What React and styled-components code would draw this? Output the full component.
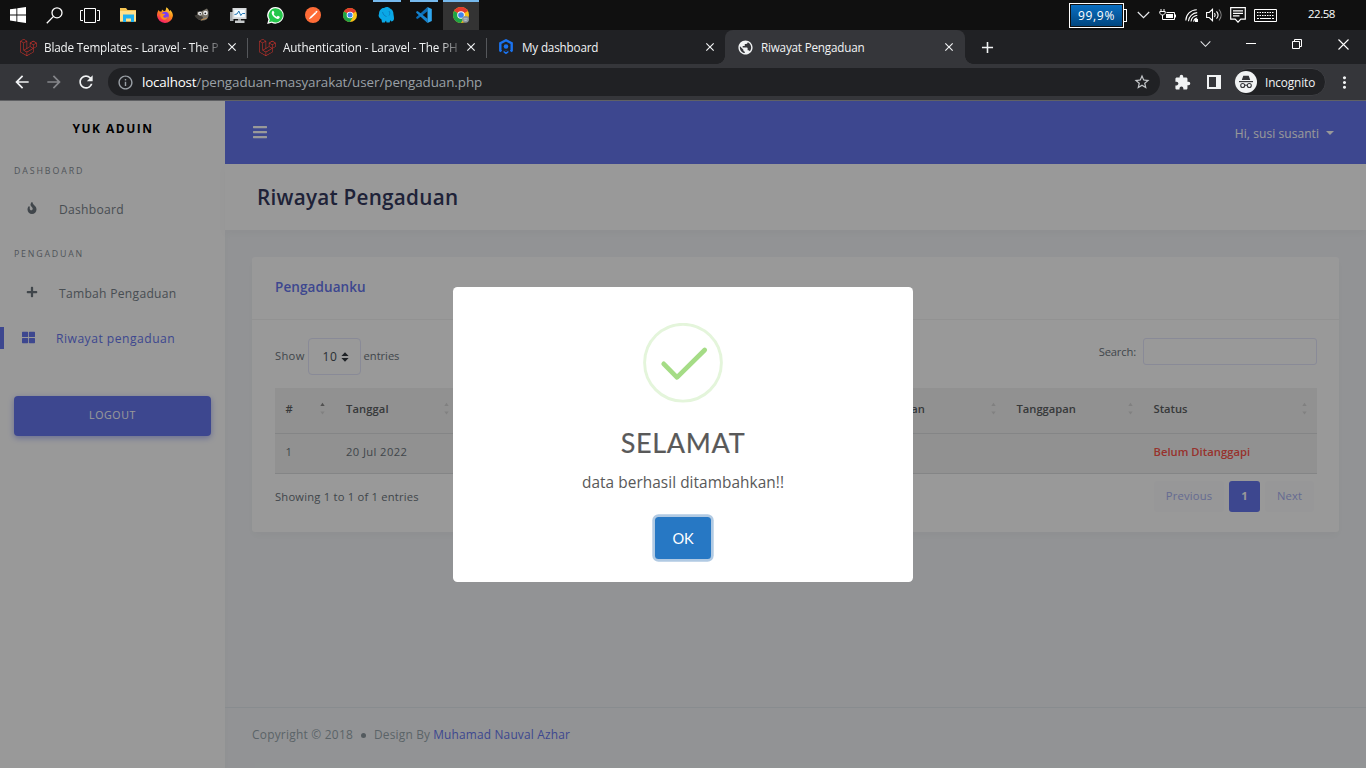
import React from 'react';
import styled, { createGlobalStyle, css } from 'styled-components';
import { FaFire, FaPlus, FaThLarge, FaBars, FaLaravel } from 'react-icons/fa';
import {
  MdArrowBack, MdArrowForward, MdRefresh, MdInfoOutline, MdStarBorder,
  MdExtension, MdMoreVert, MdPublic, MdClose, MdAdd,
} from 'react-icons/md';

const GlobalStyle = createGlobalStyle`
  *, *::before, *::after { box-sizing: border-box; }
  html, body { margin: 0; padding: 0; }
  body { width: 1366px; height: 768px; overflow: hidden; font-family: "Open Sans", "Noto Sans", sans-serif; }
  svg { display: block; flex: none; }
`;

const Screen = styled.div`
  display: flex;
  flex-direction: column;
  width: 1366px;
  height: 768px;
  overflow: hidden;
`;

const Text = styled.span`
  white-space: pre;
  letter-spacing: ${(p) => p.$ls || 0}px;
`;

/* ---------- Taskbar ---------- */

const Taskbar = styled.div`
  display: flex;
  align-items: stretch;
  height: 30px;
  background: #101010;
  color: #fff;
`;

const TaskItem = styled.div`
  width: ${(p) => p.$w || 37}px;
  display: flex;
  align-items: center;
  justify-content: center;
  background: ${(p) => (p.$active ? '#333' : 'transparent')};
  box-shadow: ${(p) => (p.$active ? 'inset 0 2px #76b9ed' : 'none')};
  ${(p) => p.$running && css`
    background: linear-gradient(#76b9ed, #76b9ed) center top / 28px 2px no-repeat;
  `}
`;

const Tray = styled.div`
  margin-left: auto;
  display: flex;
  align-items: center;
`;

const Battery = styled.div`
  display: flex;
  align-items: center;
  margin-right: 10px;
`;

const BatteryBody = styled.div`
  width: 55px;
  height: 25px;
  margin-top: 1px;
  border: 1px solid #fff;
  padding: 1px;
  display: flex;
`;

const BatteryFill = styled.div`
  flex: 1;
  display: flex;
  align-items: center;
  justify-content: center;
  background: linear-gradient(#0a6fc2, #01467f);
  font-size: 12px;
`;

const BatteryTip = styled.div`
  width: 3px;
  height: 13px;
  border: 1px solid #fff;
  border-left: 0;
`;

const TrayIcon = styled.div`
  width: ${(p) => p.$w}px;
  display: flex;
  justify-content: center;
`;

const Clock = styled.div`
  width: 58px;
  margin-left: 23px;
  margin-bottom: 3px;
  font-size: 11.5px;
  line-height: 14px;
`;

/* ---------- Browser ---------- */

const TabStrip = styled.div`
  display: flex;
  height: 34px;
  padding-left: 9px;
  background: #202124;
  color: #f1f3f4;
`;

const Tab = styled.div`
  position: relative;
  width: 239px;
  display: flex;
  align-items: center;
  padding: 0 10px 0 11px;
  font-size: 11.7px;
  border-radius: 8px 8px 0 0;
  ${(p) => p.$divider && css`
    background: linear-gradient(#55575b, #55575b) right 8px / 1px 20px no-repeat;
  `}
  ${(p) => p.$active && css`
    width: 240px;
    margin-left: -1px;
    padding-left: 12px;
    background: #35363a;
    &::before, &::after {
      content: '';
      position: absolute;
      bottom: 0;
      width: 8px;
      height: 8px;
    }
    &::before { left: -8px; background: radial-gradient(circle at 0 0, transparent 7.5px, #35363a 8px); }
    &::after { right: -8px; background: radial-gradient(circle at 100% 0, transparent 7.5px, #35363a 8px); }
  `}
`;

const TabIcon = styled.div`
  width: 16px;
  margin-right: 8px;
  display: flex;
  justify-content: center;
`;

const TabTitle = styled.div`
  white-space: nowrap;
  letter-spacing: ${(p) => p.$ls}px;
  ${(p) => p.$fade && css`mask-image: linear-gradient(90deg, #000 155px, rgba(0, 0, 0, 0.25) 176px);`}
`;

const TabClose = styled.div`
  margin-left: auto;
  margin-right: -1px;
`;

const NewTab = styled.div`
  width: 44px;
  display: flex;
  align-items: center;
  justify-content: center;
`;

const WindowControls = styled.div`
  margin-left: auto;
  display: flex;
  align-items: center;
  padding-bottom: 6px;
`;

const WindowButton = styled.div`
  width: 46px;
  display: flex;
  justify-content: center;
`;

const Toolbar = styled.div`
  display: flex;
  align-items: center;
  height: 37px;
  padding: 0 6px;
  background: #35363a;
  border-bottom: 1px solid #606164;
  color: #f1f3f4;
`;

const ToolButton = styled.div`
  width: 32px;
  display: flex;
  justify-content: center;
  color: ${(p) => (p.$muted ? '#85868a' : '#f1f3f4')};
`;

const AddressBar = styled.div`
  flex: 1;
  display: flex;
  align-items: center;
  height: 28px;
  margin: 0 6px;
  padding: 0 9px;
  border-radius: 14px;
  background: #202124;
  color: #9aa0a6;
  font-size: 13.4px;
`;

const Url = styled.div`
  flex: 1;
  display: flex;
  margin-left: 8px;
`;

const Host = styled(Text)`
  color: #fff;
`;

const IncognitoChip = styled.div`
  width: 92px;
  height: 28px;
  margin: 0 2px 0 4px;
  border: 1px solid #3d3e42;
  border-radius: 14px;
  background: #202124;
  display: flex;
  align-items: center;
  gap: 8px;
  font-size: 11.8px;
`;

/* ---------- Page ---------- */

const Page = styled.div`
  position: relative;
  flex: 1;
  display: flex;
  background: #f4f6f9;
  color: #6c757d;
`;

const Sidebar = styled.aside`
  width: 225px;
  background: #fff;
  box-shadow: 0 4px 8px rgba(0, 0, 0, 0.03);
`;

const Brand = styled.div`
  height: 54px;
  padding-left: 1px;
  display: flex;
  align-items: center;
  justify-content: center;
  color: #000;
  font-weight: 700;
  font-size: 12px;
`;

const MenuHeader = styled.div`
  height: ${(p) => p.$h}px;
  padding: 1px 14px 0;
  display: flex;
  align-items: center;
  color: #868e96;
  font-size: 8.8px;
`;

const MenuItem = styled.div`
  height: ${(p) => p.$h}px;
  padding-left: ${(p) => (p.$active ? 22 : 25)}px;
  padding-bottom: ${(p) => (p.$active ? 0 : 1)}px;
  display: flex;
  align-items: center;
  font-size: 12.1px;
  color: ${(p) => (p.$active ? '#6777ef' : '#78828a')};
  ${(p) => p.$active && css`
    background: linear-gradient(#6777ef, #6777ef) left center / 4px 22px no-repeat;
  `}
`;

const MenuIcon = styled.div`
  width: 13px;
  margin: 0 21px 2px 0;
  display: flex;
  justify-content: center;
  color: ${(p) => p.$color || '#6c757d'};
`;

const LogoutButton = styled.div`
  height: 40px;
  margin: 34px 14px 0;
  display: flex;
  align-items: center;
  justify-content: center;
  padding-bottom: 2px;
  border-radius: 4px;
  background: #6777ef;
  box-shadow: 0 2px 6px #acb5f6;
  color: #fff;
  font-size: 10.6px;
`;

const Main = styled.main`
  flex: 1;
  display: flex;
  flex-direction: column;
`;

const Navbar = styled.header`
  height: 63px;
  padding: 0 32px 2px 27px;
  display: flex;
  align-items: center;
  justify-content: space-between;
  background: #6777ef;
  color: #fff;
`;

const UserMenu = styled.div`
  display: flex;
  align-items: center;
  padding-top: 3px;
  font-size: 12px;
`;

const Caret = styled.i`
  margin-left: 7px;
  border: 4px solid transparent;
  border-top-color: #fff;
  border-bottom: 0;
`;

const SectionHeader = styled.div`
  height: 66px;
  padding: 0 0 1px 32px;
  display: flex;
  align-items: center;
  background: #fff;
  box-shadow: 0 4px 8px rgba(0, 0, 0, 0.03);
  color: #34395e;
  font-weight: 600;
  font-size: 20.7px;
`;

const Card = styled.section`
  height: 275px;
  margin: 27px 27px 0;
  border-radius: 3px;
  background: #fff;
  box-shadow: 0 4px 8px rgba(0, 0, 0, 0.03);
`;

const CardHeader = styled.div`
  height: 63px;
  padding: 0 23px 3px;
  display: flex;
  align-items: center;
  border-bottom: 1px solid #f4f4f4;
  color: #6777ef;
  font-weight: 600;
  font-size: 13.5px;
`;

const CardBody = styled.div`
  padding: 18px 22px 0 23px;
  font-size: 11.2px;
`;

const Controls = styled.div`
  height: 50px;
  display: flex;
  align-items: flex-start;
  justify-content: space-between;
`;

const Label = styled.label`
  display: flex;
  align-items: center;
`;

const LabelText = styled(Text)`
  padding-bottom: ${(p) => p.$lift || 0}px;
`;

const Select = styled.span`
  width: 53px;
  height: 37px;
  margin: 0 3px;
  padding: 0 11px 0 14px;
  display: flex;
  align-items: center;
  justify-content: space-between;
  border: 1px solid #e4e6fc;
  border-radius: 4px;
  color: #495057;
  font-size: 12px;
`;

const SearchInput = styled.span`
  width: 174px;
  height: 27px;
  margin-left: 7px;
  border: 1px solid #e4e6fc;
  border-radius: 3px;
`;

const Table = styled.div`
  background: #f2f2f2;
`;

const TableRow = styled.div`
  display: grid;
  grid-template-columns: 60.5px 123.5px 410.5px 136.5px 137px 174px;
  height: ${(p) => (p.$head ? 46 : 40)}px;
  border-bottom: 1px solid #dcdee0;
  font-weight: ${(p) => (p.$head ? 600 : 400)};
  color: ${(p) => (p.$head ? '#5c5f62' : '#6c757d')};
`;

const Cell = styled.div`
  display: flex;
  align-items: center;
  justify-content: space-between;
  padding: 0 ${(p) => (p.$first ? 11 : 10)}px 4px 10.5px;
`;

const Status = styled(Text)`
  color: #fc544b;
  font-weight: 600;
`;

const TableFooter = styled.div`
  display: flex;
  justify-content: space-between;
  padding: 7px 3px 0 0;
`;

const Info = styled(Text)`
  line-height: 32px;
`;

const Pagination = styled.div`
  display: flex;
  gap: 5px;
`;

const PageLink = styled.div`
  width: ${(p) => p.$w}px;
  height: 31px;
  padding-bottom: 2px;
  display: flex;
  align-items: center;
  justify-content: center;
  border-radius: 3px;
  background: ${(p) => (p.$active ? '#6777ef' : '#fcfcfd')};
  color: ${(p) => (p.$active ? '#fff' : '#a9b2f3')};
  font-weight: ${(p) => (p.$active ? 700 : 400)};
`;

const Footer = styled.footer`
  height: 61px;
  margin-top: auto;
  padding: 0 27px 8px;
  display: flex;
  align-items: center;
  border-top: 1px solid #e3eaef;
  color: #98a6ad;
  font-size: 11.9px;
`;

const Dot = styled.i`
  width: 5px;
  height: 5px;
  margin: 2px 8px 0 8px;
  border-radius: 50%;
  background: #8b969d;
`;

const Author = styled(Text)`
  margin-left: 3px;
  color: #6777ef;
`;

/* ---------- Dialog ---------- */

const Backdrop = styled.div`
  position: absolute;
  inset: 0;
  display: flex;
  align-items: center;
  justify-content: center;
  background: rgba(0, 0, 0, 0.4);
`;

const Dialog = styled.div`
  width: 460px;
  height: 295px;
  padding-top: 36px;
  display: flex;
  flex-direction: column;
  align-items: center;
  border-radius: 4.5px;
  background: #fff;
  color: #595959;
`;

const DialogTitle = styled.h2`
  margin: 23px 0 0;
  font-family: Lato, sans-serif;
  font-size: 27px;
  line-height: 34px;
  font-weight: 400;
  -webkit-text-stroke: 0.2px #595959;
`;

const DialogText = styled.p`
  margin: 12px 0 0;
  font-size: 15.4px;
  line-height: 22px;
`;

const OkButton = styled.button`
  width: 56px;
  height: 42px;
  margin: 23px 0 0;
  padding: 0;
  border: 0;
  border-radius: 3.5px;
  background: #2778c4;
  box-shadow: 0 0 0 2.7px rgba(100, 150, 200, 0.5);
  color: #fff;
  font: 14.6px Lato, sans-serif;
`;

/* ---------- Drawings ---------- */

const WindowsLogo = () => (
  <svg width="16" height="16" viewBox="0 0 16 16" fill="#fff">
    <path d="M0 2.3 6.4 1.4V7.4H0zM7.3 1.2 16 0v7.4H7.3zM0 8.5h6.4v6L0 13.6zM7.3 8.5H16V16l-8.7-1.3z" />
  </svg>
);
const SearchGlyph = () => (
  <svg width="17" height="17" viewBox="0 0 17 17" fill="none" stroke="#fff" strokeWidth="1.3">
    <circle cx="11" cy="5.8" r="5" /><path d="M7.5 9.4.8 16.2" />
  </svg>
);
const TaskViewGlyph = () => (
  <svg width="20" height="15" viewBox="0 0 20 15" fill="none" stroke="#fff">
    <path d="M4.5.5h11v14h-11zM3 2.5H.5v10H3M17 2.5h2.5v10H17" />
  </svg>
);
const FolderIcon = () => (
  <svg width="16" height="14" viewBox="0 0 16 14">
    <path d="M0 0h6l1.5 2H16v11.5H0z" fill="#f6c553" />
    <path d="M0 3h16v10.5H0z" fill="#ffe08a" />
    <path d="M3 6.5h11V14h-3v-3.5H6V14H3z" fill="#1fb0f0" />
  </svg>
);
const FirefoxIcon = () => (
  <svg width="16" height="16" viewBox="0 0 16 16">
    <defs>
      <linearGradient id="ff" x1=".8" y1="0" x2=".3" y2="1">
        <stop offset="0" stopColor="#ffe142" /><stop offset=".45" stopColor="#ff8a16" /><stop offset="1" stopColor="#f5156c" />
      </linearGradient>
    </defs>
    <path d="M1.6 3.1 2.7 4.6 4.6 4.4 5 2.4 7 4.2 8.6 3.5 9.4.2c2 1.2 2.6 2.6 3 4L13.4 3c1.8 2 2.6 4 2.5 6A8 8 0 0 1 0 8.6C0 6.5.6 4.5 1.6 3.1z" fill="url(#ff)" />
    <circle cx="8.1" cy="8.5" r="3.7" fill="#7b3ff2" />
    <path d="M3.3 6.8c2-.9 3 .2 5 .1-.4 1.5-2 1.3-2.2 2.5.7 1.6 3.5 1.6 4.8.2-.3 2.3-2 3.3-4 3.1-2.3-.3-4-2.7-3.6-5.9z" fill="#ff8f1c" />
  </svg>
);
const GimpIcon = () => (
  <svg width="16" height="14" viewBox="0 0 16 14">
    <path d="M3.5 3.5 6 4 13 .5 14.5 3v5c-.5 3-3 4.5-6 4.5C5.5 12.5 3 11 3 8z" fill="#7b766b" />
    <path d="M.5 7.5 4 6.5l5 2.5-1 3c-3 .2-6-1.5-7.5-4.5z" fill="#403d38" />
    <circle cx="6" cy="5.5" r="1.9" fill="#eee" /><circle cx="11.5" cy="5" r="2.3" fill="#eee" />
    <circle cx="6.3" cy="5.7" r=".8" fill="#222" /><circle cx="11.3" cy="5.3" r=".9" fill="#222" />
    <path d="m7 12 6-2" stroke="#b98b52" strokeWidth="1" />
  </svg>
);
const MonitorIcon = () => (
  <svg width="17" height="15" viewBox="0 0 17 15">
    <path d="M0 4h3.5v9H0z" fill="#a9adb0" /><path d="M2.5 0H16.5v11H2.5z" fill="#d5d8da" />
    <path d="M4.3 1.7h10.5v7.5H4.3z" fill="#f4fbff" />
    <path d="M4.5 6.5 7 6l1.8-3 2 4.5 1.5-2H15" fill="none" stroke="#2277b5" />
    <path d="M8 11h3v2H8z" fill="#999" /><path d="M5 12.5h9.5V15H5z" fill="#c7cacc" />
  </svg>
);
const WhatsAppIcon = () => (
  <svg width="17" height="17" viewBox="0 0 17 17">
    <path d="M8.5 0a8.3 8.3 0 1 1-3.9 15.7L.2 16.9l1.2-4.3A8.3 8.3 0 0 1 8.5 0z" fill="#fff" />
    <path d="M8.5 1.3a7.1 7.1 0 1 1-3.6 13.1L2 15.2l.8-2.8A7.1 7.1 0 0 1 8.5 1.3z" fill="#25c74b" />
    <path d="M5.3 4.2c.7-.7 1.2-.4 1.5.3l.6 1.3c.1.4-.6 1-.7 1.3.7 1.4 1.6 2.2 3 2.8.4-.2.9-1.2 1.3-1.1l1.7.9c.3.6-.3 1.9-1.6 2.2-2.6.3-6.6-3.6-6.4-6.1.1-.7.3-1.2.6-1.6z" fill="#fff" />
  </svg>
);
const PostmanIcon = () => (
  <svg width="16" height="16" viewBox="0 0 16 16">
    <circle cx="8" cy="8" r="8" fill="#ff6c37" />
    <path d="m4 12.3 1-2.3 5-4.8 1.2 1.2-4.8 4.5zM10 5l1.8-1.2.8.7-1.2 1.8z" fill="#fff" />
  </svg>
);
const ChromeIcon = ({ size = 14, badge }) => (
  <svg width={size} height={size} viewBox="0 0 14 14">
    <circle cx="7" cy="7" r="7" fill="#fbc116" />
    <path d="M7 7 .94 3.5A7 7 0 0 1 13.06 3.5z" fill="#e33b2e" />
    <path d="M.94 3.5A7 7 0 0 0 7 14L10.03 8.75 7 7z" fill="#1ea446" />
    <circle cx="7" cy="7" r="3.3" fill="#fff" /><circle cx="7" cy="7" r="2.5" fill="#3f83ef" />
    {badge && <><circle cx="11" cy="10.8" r="3" fill="#8d979e" /><path d="M9.3 10.3h3.4M10 11.7h2" stroke="#c9d0d4" strokeWidth=".7" /></>}
  </svg>
);
const ElephantIcon = () => (
  <svg width="17" height="16" viewBox="0 0 17 16">
    <path d="M1 7C1 3 4 .5 6 1c2-1.5 5-1 6 .5 2 .5 3.5 3 3.5 6 .5 3 1 5-.5 6.500l-2 .5-.6-1.500-.8 2.500H8.500L8 13.500l-1.200 2H4L3.500 12.500C1 11 0 9 1 7z" fill="#0aa8e6" />
    <path d="M4.500 5c1 3 2 4 4 4.500M11 4c1 1.500 1 3 0 4.500" fill="none" stroke="#0b7fc0" />
  </svg>
);
const VsCodeIcon = () => (
  <svg width="16" height="16" viewBox="0 0 16 16">
    <path d="M11.500 4.300 3.200 10.700 1.400 12 .2 11.200v-1L11.500 0z" fill="#0b6db7" />
    <path d="M11.500 11.700 3.200 5.300 1.400 4 .2 4.800v1L11.500 16z" fill="#1583cf" />
    <path d="m11.500 0 4.300 1.900v12.200L11.500 16z" fill="#2fa7f0" />
  </svg>
);
const Chevron = ({ w = 13 }) => (
  <svg width={w} height="8" viewBox="0 0 13 8" fill="none" stroke="#e8eaed" strokeWidth="1.2"><path d="m.8 1 5.7 5.7L12.2 1" /></svg>
);
const PlugBattery = () => (
  <svg width="17" height="12" viewBox="0 0 17 12" fill="none" stroke="#fff">
    <path d="M2 0v2.500M5 0v2.500M.8 2.500h5.400v1.700L4.500 6H2.500L.8 4.200zM3.500 6v4.500h12v-7H7.500" />
    <path d="M7 5h7v4H7z" fill="#fff" stroke="none" /><path d="M16.500 5.500v3" />
  </svg>
);
const WifiIcon = () => (
  <svg width="13" height="13" viewBox="0 0 13 13" fill="none" stroke="#fff" strokeWidth="1.1">
    <path d="M.8 11.5C1 5.5 5.5 1 11.8.8M3.4 12.3C3.8 7.5 7.5 4 12.2 3.6M6 12.500c.4-3.300 3-5.700 6.300-6.200M8.600 12.600c.3-1.800 1.600-3.200 3.600-3.600" />
    <path d="M10 10h3v3h-3z" fill="#fff" stroke="none" />
  </svg>
);
const SpeakerIcon = () => (
  <svg width="17" height="14" viewBox="0 0 17 14" fill="none" stroke="#fff" strokeWidth="1.1">
    <path d="M.6 4.5h2.6L6.5 1.3v11.4L3.2 9.5H.6zM8.500 5c.8 1.200.8 2.800 0 4M10.500 3.300c1.900 2.200 1.900 5.200 0 7.400" />
    <path d="M13 1.500c2.800 3.300 2.800 7.700 0 11" stroke="#888" />
  </svg>
);
const ActionCenter = () => (
  <svg width="16" height="16" viewBox="0 0 16 16" fill="none" stroke="#fff" strokeWidth="1.2">
    <path d="M.7.7h14.600v11.500h-4.500L8 15.200l-2.800-3H.7zM3 3.800h10M3 6.300h10M3 8.800h6.500" />
  </svg>
);
const KeyboardIcon = () => (
  <svg width="23" height="13" viewBox="0 0 23 13" fill="none" stroke="#fff">
    <path d="M.5.5h22v12H.5z" /><path d="M3 3.500h17M3 6.500h17" strokeDasharray="1.5 1" /><path d="M3 9.500h2M6 9.500h11M18 9.500h2" />
  </svg>
);
const HexLogo = () => (
  <svg width="14" height="16" viewBox="0 0 14 16" fill="none" stroke="#1a73f0" strokeWidth="2.4">
    <path d="M2.500 12.300 1.300 11.500V4.300L7 1.300l5.700 3v7.200l-1.200.8" />
    <circle cx="7" cy="7.5" r="2.3" fill="#1a73f0" stroke="none" />
    <path d="M4.600 11.700h4.800v1.700L7 15.200l-2.400-1.800z" fill="#1a73f0" stroke="none" />
    <path d="m5 11.500 2 1.200 2-1.200" stroke="#202124" strokeWidth="1" />
  </svg>
);
const Minimize = () => <svg width="10" height="2"><path d="M0 .5h10" stroke="#fff" /></svg>;
const Restore = () => (
  <svg width="10" height="10" viewBox="0 0 10 10" fill="none" stroke="#fff"><path d="M.5 2.500h7v7h-7zM2.500 2.500v-2h7v7h-2" /></svg>
);
const CloseWin = () => <svg width="11" height="11" viewBox="0 0 11 11" stroke="#fff" strokeWidth="1.1"><path d="m.5.5 10 10M10.500.5l-10 10" /></svg>;
const SidePanel = () => (
  <svg width="14" height="14" viewBox="0 0 14 14"><path d="M0 0h14v14H0zM2 2v10h7V2z" fill="#f1f3f4" fillRule="evenodd" /></svg>
);
const IncognitoIcon = () => (
  <svg width="22" height="22" viewBox="0 0 22 22">
    <circle cx="11" cy="11" r="11" fill="#f1f3f4" />
    <path d="m6.800 9 1.500-4.300h5.400L15.200 9z" fill="#35363a" />
    <path d="M4 10.600h14" stroke="#35363a" strokeWidth="1.2" />
    <g fill="none" stroke="#35363a" strokeWidth="1.1"><circle cx="7.7" cy="14.5" r="2" /><circle cx="14.3" cy="14.5" r="2" /><path d="M9.700 14.200h2.600" /></g>
  </svg>
);
const SortIcon = ({ up }) => (
  <svg width="5" height="13" viewBox="0 0 5 13">
    <path d="M.3 4 2.500.8 4.700 4z" fill={up ? '#888' : '#d6d6d6'} /><path d="M.3 9.500h4.400l-2.200 3z" fill="#d8d8d8" />
  </svg>
);
const SelectArrows = () => (
  <svg width="8" height="10" viewBox="0 0 8 10" fill="#343a40"><path d="M.4 4 4 .3 7.600 4zM.4 6h7.200L4 9.700z" /></svg>
);
const SuccessMark = () => (
  <svg width="80" height="80" viewBox="0 0 80 80" fill="none">
    <circle cx="40" cy="39.700" r="38.400" stroke="#e4f5db" strokeWidth="2.9" />
    <path d="M20.700 40.800 34 54.300 61.700 27" stroke="#a5dc86" strokeWidth="4.7" strokeLinecap="round" strokeLinejoin="round" />
  </svg>
);

const taskItems = [
  { w: 36, icon: <WindowsLogo /> }, { w: 36, icon: <SearchGlyph /> }, { w: 36, icon: <TaskViewGlyph /> },
  { w: 39, icon: <FolderIcon /> }, { w: 36, icon: <FirefoxIcon /> }, { icon: <GimpIcon /> }, { icon: <MonitorIcon /> },
  { icon: <WhatsAppIcon /> }, { icon: <PostmanIcon /> }, { icon: <ChromeIcon /> },
  { icon: <ElephantIcon />, running: true }, { w: 38, icon: <VsCodeIcon />, running: true },
  { w: 36, icon: <ChromeIcon size={16} badge />, active: true },
];

const tabs = [
  { icon: <FaLaravel size={17} color="#d8332c" />, title: 'Blade Templates - Laravel - The P', ls: -0.16, divider: true, fade: true },
  { icon: <FaLaravel size={17} color="#d8332c" />, title: 'Authentication - Laravel - The PH', ls: -0.1, divider: true, fade: true },
  { icon: <HexLogo />, title: 'My dashboard', ls: -0.17 },
  { icon: <MdPublic size={17} />, title: 'Riwayat Pengaduan', ls: -0.2, active: true },
];

const columns = [['#', 0], ['Tanggal', 0.1], ['', 0], ['Laporan', 0], ['Tanggapan', 0], ['Status', 0]];

export default function App() {
  return (
    <Screen>
      <GlobalStyle />
      <Taskbar>
        {taskItems.map((t, i) => (
          <TaskItem key={i} $w={t.w} $active={t.active} $running={t.running}>{t.icon}</TaskItem>
        ))}
        <Tray>
          <Battery>
            <BatteryBody><BatteryFill><Text $ls={0.7}>99,9%</Text></BatteryFill></BatteryBody>
            <BatteryTip />
          </Battery>
          <TrayIcon $w={13}><Chevron /></TrayIcon>
          <TrayIcon $w={35}><PlugBattery /></TrayIcon>
          <TrayIcon $w={13}><WifiIcon /></TrayIcon>
          <TrayIcon $w={32}><SpeakerIcon /></TrayIcon>
          <TrayIcon $w={16}><ActionCenter /></TrayIcon>
          <TrayIcon $w={39}><KeyboardIcon /></TrayIcon>
          <Clock><Text $ls={-0.5}>22.58</Text></Clock>
        </Tray>
      </Taskbar>

      <TabStrip>
        {tabs.map((t) => (
          <Tab key={t.title} $active={t.active} $divider={t.divider}>
            <TabIcon>{t.icon}</TabIcon>
            <TabTitle $ls={t.ls} $fade={t.fade}>{t.title}</TabTitle>
            <TabClose><MdClose size={14} /></TabClose>
          </Tab>
        ))}
        <NewTab><MdAdd size={19} /></NewTab>
        <WindowControls>
          <WindowButton><Chevron w={11} /></WindowButton>
          <WindowButton><Minimize /></WindowButton>
          <WindowButton><Restore /></WindowButton>
          <WindowButton><CloseWin /></WindowButton>
        </WindowControls>
      </TabStrip>

      <Toolbar>
        <ToolButton><MdArrowBack size={20} /></ToolButton>
        <ToolButton $muted><MdArrowForward size={20} /></ToolButton>
        <ToolButton><MdRefresh size={20} /></ToolButton>
        <AddressBar>
          <MdInfoOutline size={17} />
          <Url>
            <Host $ls={-0.2}>localhost</Host>
            <Text $ls={-0.07}>/pengaduan-masyarakat/user/pengaduan.php</Text>
          </Url>
          <MdStarBorder size={18} color="#c4c7ca" />
        </AddressBar>
        <ToolButton><MdExtension size={17} /></ToolButton>
        <ToolButton><SidePanel /></ToolButton>
        <IncognitoChip>
          <IncognitoIcon />
          <Text $ls={-0.12}>Incognito</Text>
        </IncognitoChip>
        <ToolButton><MdMoreVert size={19} /></ToolButton>
      </Toolbar>

      <Page>
        <Sidebar>
          <Brand><Text $ls={1.5}>YUK ADUIN</Text></Brand>
          <MenuHeader $h={30}><Text $ls={1.9}>DASHBOARD</Text></MenuHeader>
          <MenuItem $h={49}>
            <MenuIcon><FaFire size={12} /></MenuIcon><Text $ls={0.28}>Dashboard</Text>
          </MenuItem>
          <MenuHeader $h={39}><Text $ls={1.8}>PENGADUAN</Text></MenuHeader>
          <MenuItem $h={41}>
            <MenuIcon><FaPlus size={12} /></MenuIcon><Text $ls={0.28}>Tambah Pengaduan</Text>
          </MenuItem>
          <MenuItem $h={48} $active>
            <MenuIcon $color="#6777ef"><FaThLarge size={13} /></MenuIcon><Text $ls={0.5}>Riwayat pengaduan</Text>
          </MenuItem>
          <LogoutButton><Text $ls={0.6}>LOGOUT</Text></LogoutButton>
        </Sidebar>

        <Main>
          <Navbar>
            <FaBars size={16} />
            <UserMenu><Text $ls={0.06}>Hi, susi susanti</Text><Caret /></UserMenu>
          </Navbar>
          <SectionHeader><Text $ls={0.26}>Riwayat Pengaduan</Text></SectionHeader>
          <Card>
            <CardHeader><Text $ls={0.1}>Pengaduanku</Text></CardHeader>
            <CardBody>
              <Controls>
                <Label>
                  <LabelText $ls={0.3} $lift={2}>Show</LabelText>
                  <Select><Text $ls={0.6}>10</Text><SelectArrows /></Select>
                  <LabelText $ls={-0.05} $lift={2}>entries</LabelText>
                </Label>
                <Label><LabelText $ls={-0.15}>Search:</LabelText><SearchInput /></Label>
              </Controls>
              <Table>
                <TableRow $head>
                  {columns.map(([name, ls], i) => (
                    <Cell key={i} $first={i === 0}><Text $ls={ls}>{name}</Text><SortIcon up={i === 0} /></Cell>
                  ))}
                </TableRow>
                <TableRow>
                  <Cell>1</Cell>
                  <Cell><Text $ls={0.4}>20 Jul 2022</Text></Cell>
                  <Cell /><Cell /><Cell />
                  <Cell><Status $ls={0.04}>Belum Ditanggapi</Status></Cell>
                </TableRow>
              </Table>
              <TableFooter>
                <Info $ls={0.21}>Showing 1 to 1 of 1 entries</Info>
                <Pagination>
                  <PageLink $w={70}><Text $ls={0.2}>Previous</Text></PageLink>
                  <PageLink $w={31} $active>1</PageLink>
                  <PageLink $w={49}><Text $ls={0.15}>Next</Text></PageLink>
                </Pagination>
              </TableFooter>
            </CardBody>
          </Card>
          <Footer>
            <Text $ls={0.25}>Copyright © 2018</Text>
            <Dot />
            <Text $ls={0.19}>Design By</Text>
            <Author $ls={0.18}>Muhamad Nauval Azhar</Author>
          </Footer>
        </Main>

        <Backdrop>
          <Dialog>
            <SuccessMark />
            <DialogTitle><Text $ls={0.7}>SELAMAT</Text></DialogTitle>
            <DialogText><Text $ls={0.05}>data berhasil ditambahkan!!</Text></DialogText>
            <OkButton><Text $ls={-0.3}>OK</Text></OkButton>
          </Dialog>
        </Backdrop>
      </Page>
    </Screen>
  );
}
